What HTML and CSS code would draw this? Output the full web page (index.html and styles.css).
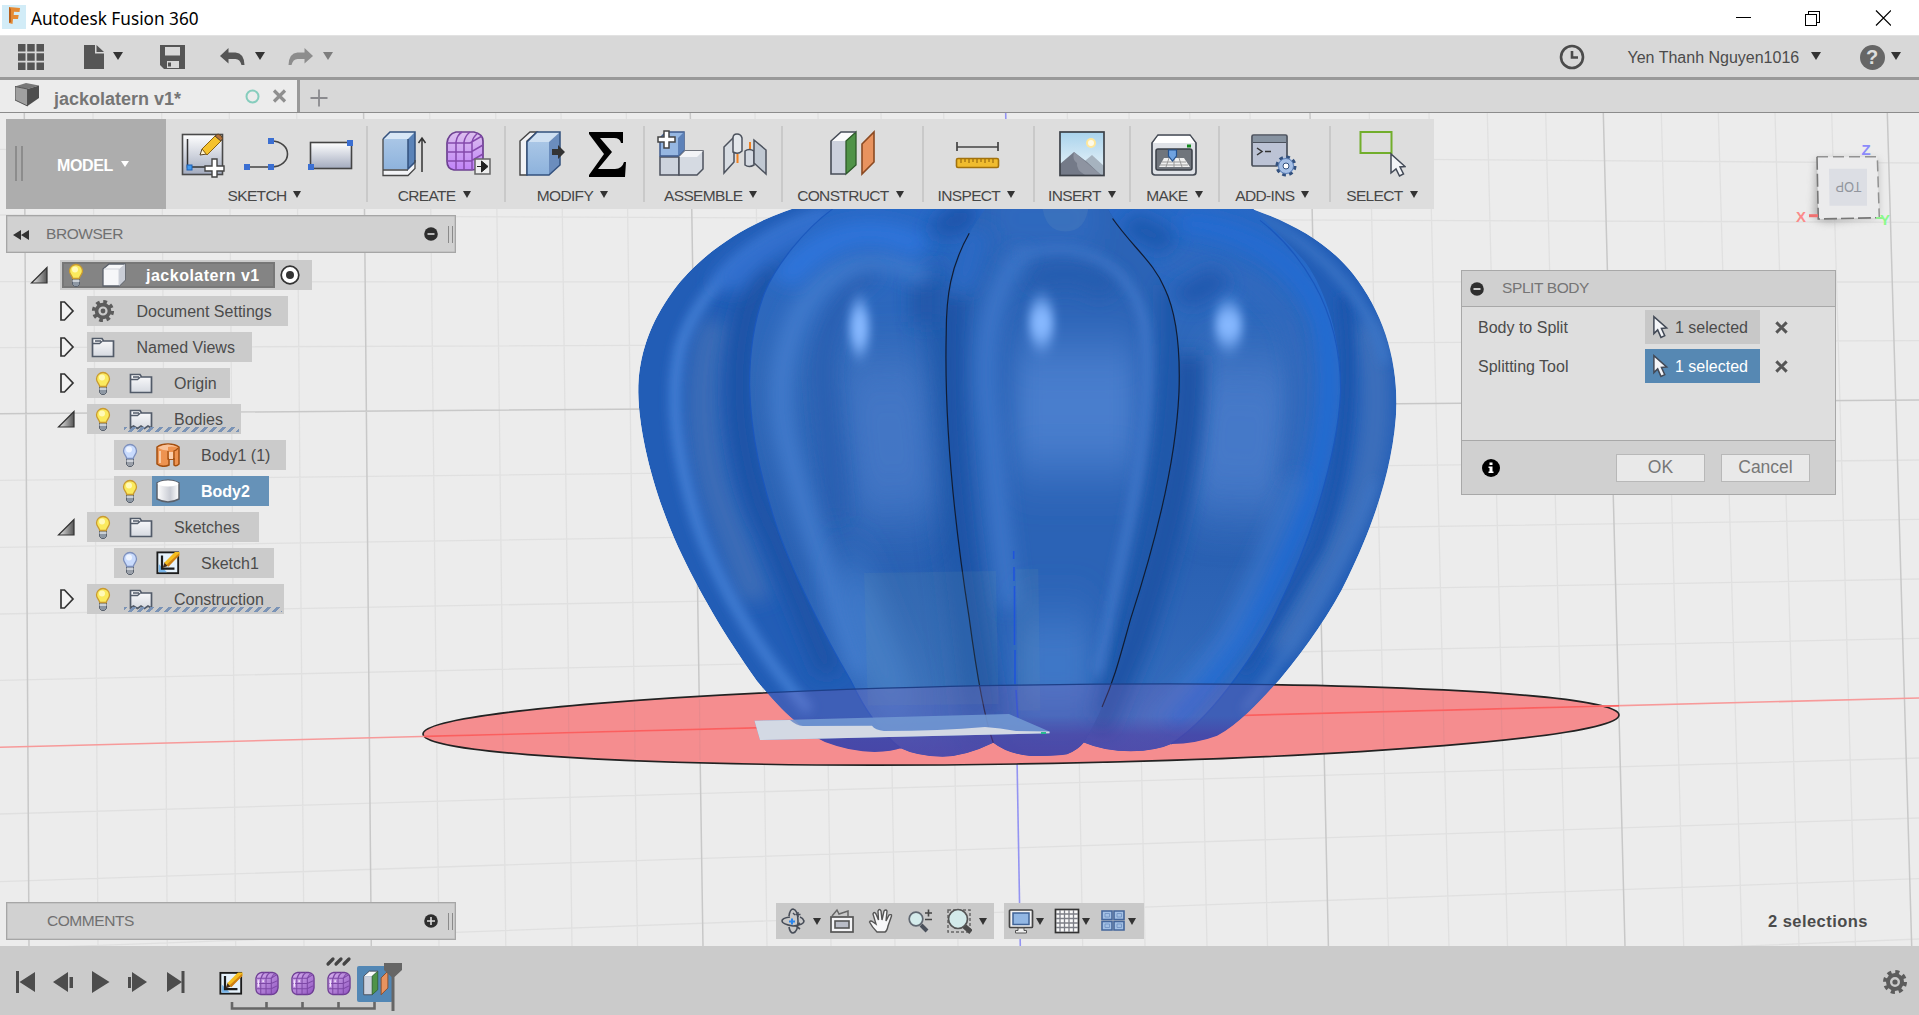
FILE: index.html
```html
<!DOCTYPE html>
<html lang="en">
<head>
<meta charset="utf-8">
<title>Autodesk Fusion 360</title>
<link rel="stylesheet" href="styles.css">
</head>
<body>
<svg class="defs" width="0" height="0" aria-hidden="true">
  <defs>
    <linearGradient id="gPaper" x1="0" y1="0" x2="0" y2="1"><stop offset="0" stop-color="#fff"/><stop offset="1" stop-color="#a3abbe"/></linearGradient>
    <linearGradient id="gBlue" x1="0" y1="0" x2="0" y2="1"><stop offset="0" stop-color="#a9c6e6"/><stop offset="1" stop-color="#8db2dc"/></linearGradient>
    <linearGradient id="gPurple" x1="0" y1="0" x2="0" y2="1"><stop offset="0" stop-color="#dcc0ee"/><stop offset="1" stop-color="#c083f8"/></linearGradient>
    <linearGradient id="gPurple2" x1="0" y1="0" x2="1" y2="1"><stop offset="0" stop-color="#d9b4f0"/><stop offset="1" stop-color="#8f52c0"/></linearGradient>
    <linearGradient id="gFolder" x1="0" y1="0" x2="0" y2="1"><stop offset="0" stop-color="#fdfdfe"/><stop offset="1" stop-color="#d5d9e0"/></linearGradient>
    <linearGradient id="gTri" x1="0" y1="0" x2="1" y2="0"><stop offset="0" stop-color="#eee"/><stop offset="1" stop-color="#555"/></linearGradient>
    <linearGradient id="gSky" x1="0" y1="0" x2="0" y2="1"><stop offset="0" stop-color="#a9d3ec"/><stop offset="1" stop-color="#eef6fa"/></linearGradient>
    <linearGradient id="gCyl" x1="0" y1="0" x2="1" y2="0"><stop offset="0" stop-color="#fff"/><stop offset=".6" stop-color="#c9ccd4"/><stop offset="1" stop-color="#fff"/></linearGradient>
    <symbol id="bulb" viewBox="0 0 18 24">
      <path d="M5.500 15h7v6.500l-2 2h-3l-2-2z" fill="#8d97a3" stroke="#59616d"/>
      <path d="M5.500 18h7" stroke="#e6e9ee" stroke-width="1.400"/>
      <path d="M9 1.500a6.500 6.500 0 0 0-6.500 6.500c0 3 2.500 4.500 3.300 7.500h6.400c.8-3 3.300-4.500 3.300-7.500A6.500 6.500 0 0 0 9 1.500z" fill="#fbea5d" stroke="#c99a30" stroke-width="1.300"/>
      <circle cx="8" cy="6.500" r="3" fill="#fff9b8"/>
    </symbol>
    <symbol id="bulb-off" viewBox="0 0 18 24">
      <path d="M5.500 15h7v6.500l-2 2h-3l-2-2z" fill="#9aa0a9" stroke="#59616d"/>
      <path d="M5.500 18h7" stroke="#e6e9ee" stroke-width="1.400"/>
      <path d="M9 1.500a6.500 6.500 0 0 0-6.500 6.500c0 3 2.500 4.500 3.300 7.500h6.400c.8-3 3.300-4.500 3.300-7.500A6.500 6.500 0 0 0 9 1.500z" fill="#c9dbfd" stroke="#7d90bd" stroke-width="1.300"/>
      <circle cx="8" cy="6.500" r="3" fill="#eef4ff"/>
    </symbol>
    <symbol id="folder" viewBox="0 0 24 22">
      <path d="M1.500 20V2.500h9.500l1.500 2.500h10v15.500h-21z" fill="url(#gFolder)" stroke="#525b69" stroke-width="1.700"/>
      <path d="M1.500 7.500h7l3-2.500M4 5h6" fill="none" stroke="#525b69" stroke-width="1.300"/>
    </symbol>
    <symbol id="folder-torn" viewBox="0 0 24 22">
      <path d="M1.500 20V2.500h9.500l1.500 2.500h10v15l-3.500-2-3.500 2.500-3.500-2.500-3.500 2.500-4-2.500z" fill="url(#gFolder)" stroke="#525b69" stroke-width="1.700"/>
      <path d="M1.500 7.500h7l3-2.500M4 5h6" fill="none" stroke="#525b69" stroke-width="1.300"/>
    </symbol>
    <symbol id="sketch-sm" viewBox="0 0 26 26">
      <rect x="1.500" y="1.500" width="22.500" height="22.500" fill="#e6f2fb" stroke="#1c1c1c" stroke-width="2"/>
      <path d="M3 14v9h9z" fill="#79b6ea"/>
      <path d="M6.500 5v14H20" fill="none" stroke="#1c1c1c" stroke-width="2.400"/>
      <path d="M7 18.500l2.500-6.500 4 4z" fill="#49301c"/>
      <path d="M9 12.800L20.500 1h5v3.500l-12.500 12z" fill="#f5bd1e"/><path d="M11.500 15L25 2.500V5L13.500 17z" fill="#cf7f14"/>
    </symbol>
    <symbol id="tri-closed" viewBox="0 0 18 22"><path d="M4 2h3.500l8.500 9-8.500 9H4z" fill="#f3f3f3" stroke="#333" stroke-width="1.700"/></symbol>
    <symbol id="tri-open" viewBox="0 0 18 18"><path d="M17 1.500v15.500H1.500z" fill="url(#gTri)" stroke="#333" stroke-width="1.200"/></symbol>
    <symbol id="form" viewBox="0 0 25 25">
      <path d="M7 1h11q6 1 6 6v10q-1 7-7 7H6q-5-1-5-6V7q1-5 6-6z" fill="url(#gPurple2)" stroke="#6e3d94" stroke-width="1.400"/>
      <path d="M2 7h15l6-4M2 12.500h15l6.500-3M2 18h15l6-3M6 24V8q1-5 4-7M11.500 24V7q1-4 4-6M17 24V7q1-3 4-5" fill="none" stroke="#7d48a6" stroke-width="1.100"/>
      <path d="M3.500 9v7M8.500 9v2" stroke="#f2e2fb" stroke-width="1.500"/>
    </symbol>
    <symbol id="cursor" viewBox="0 0 18 26"><path d="M2 1.500v18l4-4 3.500 8 4-1.800-3.500-7.700 5.500-.5z" fill="#f4f5f8" stroke="#434a57" stroke-width="1.600"/></symbol>
    <symbol id="x" viewBox="0 0 16 16"><path d="M2.500 2.500l11 11M13.500 2.500l-11 11" stroke="currentColor" stroke-width="3.200"/></symbol>
    <symbol id="gear" viewBox="0 0 26 26">
      <circle cx="13" cy="13" r="10" fill="none" stroke="#5c5c5c" stroke-width="4" stroke-dasharray="4 3.850"/>
      <circle cx="13" cy="13" r="7" fill="none" stroke="#5c5c5c" stroke-width="4"/><circle cx="13" cy="13" r="2.600" fill="#5c5c5c"/>
    </symbol>
    <symbol id="plane-split" viewBox="0 0 48 48">
      <path d="M3 11L13 2h15l-10 9z" fill="#fbfbfc"/><path d="M3 11h15v33H3z" fill="#ccd1dd"/>
      <path d="M18 11L28 2v33l-10 9z" fill="#4f9347" stroke="#2e5a2a" stroke-width="1.300"/>
      <path d="M18 44H3V11L13 2h15" fill="none" stroke="#474d58" stroke-width="1.600"/>
      <path d="M34 14l12-12v30L34 44z" fill="#e8935f" stroke="#8b4a22" stroke-width="1.600"/>
    </symbol>
  </defs>
</svg>

<div class="app">
  <header class="titlebar">
    <svg class="logo" width="24" height="24" viewBox="0 0 24 24"><rect width="24" height="24" fill="#d2ecf7"/><path d="M7 2l11 1-.5 4-5.500-.2-.3 3.200h5l-.7 4H11l-.5 5L7 18z" fill="#e58a33"/><path d="M7 2l2 2v13l-2 1z" fill="#b9601c"/></svg>
    <h1>Autodesk Fusion 360</h1>
    <svg class="winbtns" width="160" height="20" viewBox="0 0 160 20" fill="none" stroke="#000" shape-rendering="crispEdges"><path d="M5 8.500h15"/><path d="M74.500 5.500h11v11h-11zM77.500 5.500v-3h11v11h-3"/><path d="M145 1.500l15 15M160 1.500l-15 15" shape-rendering="auto" stroke-width="1.200"/></svg>
  </header>

  <div class="quickbar">
    <svg width="26" height="26" viewBox="0 0 26 26" fill="#555"><path d="M0 0h7.500v7.500H0zM9.200 0h7.500v7.500H9.200zM18.500 0H26v7.500h-7.500zM0 9.200h7.500v7.500H0zM9.200 9.200h7.500v7.500H9.200zM18.500 9.200H26v7.500h-7.500zM0 18.500h7.500V26H0zM9.200 18.500h7.500V26H9.200zM18.500 18.500H26V26h-7.500z"/></svg>
    <svg class="q-file" width="20" height="24" viewBox="0 0 20 24" fill="#555"><path d="M0 0h11v8.500h9V24H0z"/><path d="M12.500 0v7H20z"/></svg>
    <i class="caret q-c1"></i>
    <svg class="q-save" width="25" height="24" viewBox="0 0 25 24"><path d="M0 0h25v24H4l-4-4z" fill="#555"/><path d="M5 2h15v8.500H5zM7 16h12v7H7z" fill="#d8d8d8"/><path d="M8 17.500h3v4H8z" fill="#555"/></svg>
    <svg class="q-undo" width="25" height="18" viewBox="0 0 25 18"><path d="M0 8l8.500-8v4.500h7Q24 5 24.500 17h-3Q20 11 15.500 11h-7v4.500z" fill="#555"/></svg>
    <i class="caret q-c2"></i>
    <svg class="q-redo" width="25" height="18" viewBox="0 0 25 18"><path d="M25 8l-8.500-8v4.500h-7Q1 5 .5 17h3Q5 11 9.500 11h7v4.500z" fill="#8d8d8d"/></svg>
    <i class="caret q-c3 dim"></i>
    <div class="quick-right">
      <svg width="26" height="26" viewBox="0 0 26 26" fill="none" stroke="#4b4b4b"><circle cx="13" cy="13" r="11" stroke-width="2.600"/><path d="M13 7v6.500h6" stroke-width="2.600"/></svg>
      <span class="user">Yen Thanh Nguyen1016</span><i class="caret"></i>
      <span class="help">?</span><i class="caret"></i>
    </div>
  </div>

  <nav class="tabs">
    <div class="tab">
      <svg width="24" height="24" viewBox="0 0 24 24"><path d="M0 3.500L11 0l13 2.500L12.500 6z" fill="#777"/><path d="M0 3.500L12.500 6v17L0 17z" fill="#a0a0a0" stroke="#555"/><path d="M12.500 6L24 2.500V15l-11.500 8z" fill="#4e4e4e"/></svg>
      <span class="tab-name">jackolatern v1*</span>
      <svg class="ring" width="15" height="15" viewBox="0 0 15 15"><circle cx="7.500" cy="7.500" r="6" fill="none" stroke="#86cdbd" stroke-width="2"/></svg>
      <svg class="tab-x" width="17" height="16"><use href="#x"/></svg>
    </div>
    <svg class="tab-add" width="18" height="18" viewBox="0 0 18 18"><path d="M9 .5v17M.5 9h17" stroke="#8a8a8e" stroke-width="1.800"/></svg>
  </nav>

  <main class="viewport">
    <svg class="scene" width="1919" height="833" viewBox="0 113 1919 833">
      <defs>
        <filter id="b6" filterUnits="userSpaceOnUse" x="-100" y="-150" width="1800" height="1800"><feGaussianBlur stdDeviation="9 14"/></filter>
        <filter id="b14" filterUnits="userSpaceOnUse" x="-100" y="-150" width="1800" height="1800"><feGaussianBlur stdDeviation="17 24"/></filter>
        <filter id="b25" filterUnits="userSpaceOnUse" x="-100" y="-150" width="1800" height="1800"><feGaussianBlur stdDeviation="24 70"/></filter>
        <filter id="bHi" filterUnits="userSpaceOnUse" x="-100" y="-150" width="1800" height="1800"><feGaussianBlur stdDeviation="9 25"/></filter>
        <filter id="cubeShadow" x="-50%" y="-50%" width="200%" height="200%"><feGaussianBlur stdDeviation="4"/></filter>
        <path id="body" d="M400 10C280 55 190 150 140 245C96 330 73 420 73 520C75 640 105 800 150 940C190 1060 235 1170 300 1300Q350 1385 375 1410Q400 1445 430 1465Q480 1492 525 1492Q560 1490 575 1482Q605 1503 655 1505Q700 1503 752 1467Q780 1498 825 1503Q880 1502 893 1498Q915 1485 925 1466Q965 1490 1015 1490Q1065 1488 1092 1470Q1140 1470 1180 1448C1230 1410 1270 1340 1300 1295C1350 1210 1400 1110 1430 1020C1475 890 1520 720 1523 550C1523 420 1495 300 1440 200C1390 110 1310 50 1215 10Z"/>
        <path id="lobeL" d="M455 10C390 80 335 180 315 250C290 340 286 440 286 500C288 640 310 760 335 870C365 1000 430 1180 480 1300Q520 1420 575 1482Q605 1503 655 1505Q700 1503 752 1467C735 1400 720 1250 706 1130C690 960 672 700 662 520C658 350 670 200 700 110L745 10Z"/>
        <path id="lobeC" d="M745 10C690 100 665 220 662 360C658 600 676 860 706 1130C720 1280 735 1400 752 1467Q780 1498 825 1503Q880 1502 893 1498Q915 1485 925 1466C960 1390 990 1260 1015 1130C1045 1000 1100 740 1107 520C1110 400 1100 300 1080 240C1050 150 1010 120 965 10Z"/>
        <path id="lobeR" d="M965 10C1010 120 1050 150 1080 240C1100 300 1110 400 1107 520C1100 740 1045 1000 1015 1130C990 1260 960 1390 925 1466Q965 1490 1015 1490Q1065 1488 1092 1470C1180 1390 1270 1190 1300 1090C1350 950 1410 700 1416 520C1418 380 1390 250 1350 170C1320 120 1280 70 1240 10Z"/>
        <clipPath id="cBody"><use href="#body"/></clipPath><clipPath id="cL"><use href="#lobeL"/></clipPath><clipPath id="cC"><use href="#lobeC"/></clipPath><clipPath id="cR"><use href="#lobeR"/></clipPath>
        <clipPath id="cBodyPx"><use href="#body" transform="translate(600 200) scale(.523 .37)"/></clipPath>
        <linearGradient id="vL" x1="0" y1="0" x2="0" y2="1"><stop offset="0" stop-color="#2868c6"/><stop offset=".3" stop-color="#3068b8"/><stop offset=".65" stop-color="#2a61b3"/><stop offset="1" stop-color="#376fc0"/></linearGradient>
        <linearGradient id="purpleFade" x1="0" y1="0" x2="0" y2="1"><stop offset="0" stop-color="#50319a" stop-opacity="0"/><stop offset=".35" stop-color="#50319a" stop-opacity=".45"/><stop offset="1" stop-color="#50319a" stop-opacity=".6"/></linearGradient>
      </defs>
      <g class="grid">
        <path d="M93 113L98 946M161.700 113L167.300 946M229.300 113L235.700 946M296.700 113L304 946M429.700 113L439 946M495.700 113L505.800 946M561 113L572 946M626.300 113L637.500 946M755 113L767 946M818 113L831 946M881 113L895 946M943.700 113L958 946M1067.300 113L1082.700 946M1129 113L1145 946M1189.700 113L1207 946M1250 113L1267.500 946M1369.300 113L1388.500 946M1429 113L1449 946M1487.300 113L1507.500 946M1545.700 113L1566.500 946M1661.300 113L1683.700 946M1718.300 113L1742 946M1775 113L1799 946M1831.700 113L1855.500 946M0 149.300L1919 163M0 215L1919 222.300M0 281.700L1919 282M0 347.700L1919 340.700M0 480.300L1919 460M0 547.300L1919 519.300M0 614L1919 579M0 680.300L1919 638.300M0 814L1919 758M0 881.700L1919 818M0 949L1919 878.700M0 1016L1919 939"/>
        <path class="major" d="M24.300 113L29 946M363.600 113L371.300 946M690.300 113L703 946M1310 113L1328.400 946M1603.300 113L1625 946M1887.300 113L1911.700 946M0 413.700L1919 400"/>
      </g>
      <path d="M1005.700 113L1020.300 946" stroke="#9494f2" stroke-width="1.600"/>
      <ellipse rx="598" ry="39.400" transform="matrix(1 -.0159 0 1 1021 724.500)" fill="#f58d8f" stroke="#222" stroke-width="1.600"/>
      <path class="grid-under" d="M502.500 715L503 750M568.500 708L569 755M634.500 703L635 758M699.500 699L700 760M1322 688L1323 752M1383 689L1384 748M1443 692L1444 743M1501 696L1502 738"/>
      <path d="M0 747.300L1919 698" stroke="#f79a9a" stroke-width="1.600"/>
      <path d="M424 736.400L1619 705.700" stroke="#fb5f5f" stroke-width="1.600"/>

      <g transform="translate(600 200) scale(.523 .37)">
        <g clip-path="url(#cBody)" fill="none">
          <use href="#body" fill="#225db6"/>
          <path d="M225 330C190 450 190 640 225 800L300 1080" stroke="#3b6cb7" stroke-width="66" filter="url(#b14)"/>
          <path d="M330 180C240 300 250 700 330 900L440 1280" stroke="#1b53a6" stroke-width="50" filter="url(#b14)"/>
          <path d="M430 40C300 90 190 240 155 390C130 530 145 690 185 870C220 1020 300 1220 400 1380" stroke="#3f7bd2" stroke-width="24" filter="url(#b6)"/>
          <path d="M520 30C400 50 270 150 240 240" stroke="#3070cf" stroke-width="60" filter="url(#b14)"/>
          <path d="M1465 330C1495 480 1490 700 1440 860L1300 1220" stroke="#3d70bb" stroke-width="56" filter="url(#b14)"/>
          <path d="M1420 260C1440 460 1430 720 1370 940L1230 1270" stroke="#1b56ad" stroke-width="26" filter="url(#b6)"/>
          <path d="M1240 30C1390 130 1480 290 1500 440" stroke="#3b75c6" stroke-width="20" filter="url(#b6)"/>
          <path d="M1480 760C1440 930 1370 1130 1230 1380" stroke="#3d75c5" stroke-width="14" filter="url(#b6)"/>
        </g>
        <g clip-path="url(#cL)" fill="none">
          <use href="#lobeL" fill="url(#vL)"/>
          <path d="M630 200C670 300 655 700 690 1000L725 1450" stroke="#1d54a6" stroke-width="60" filter="url(#b25)" opacity=".8"/>
          <path d="M540 430L570 860" stroke="#4679c8" stroke-width="150" filter="url(#b25)" opacity=".85"/>
          <path d="M530 190C470 230 430 320 425 470L450 860" stroke="#295fb1" stroke-width="36" filter="url(#b14)"/>
          <path d="M625 220V330" stroke="#2258ab" stroke-width="60" filter="url(#b14)"/>
          <path d="M620 210C540 130 440 160 385 300C340 420 335 560 365 700C390 850 430 1000 500 1280" stroke="#427ccd" stroke-width="40" filter="url(#b14)"/>
          <path d="M350 220C440 60 540 70 620 130" stroke="#2f74db" stroke-width="60" filter="url(#b14)"/>
          <path d="M690 10Q700 90 640 60" stroke="#1d55ab" stroke-width="60" filter="url(#b14)"/>
          <ellipse cx="496" cy="345" rx="19" ry="70" fill="#86b8ff" filter="url(#bHi)"/>
          <path d="M470 1000L580 1400" stroke="#437dcc" stroke-width="70" filter="url(#b25)"/>
        </g>
        <g clip-path="url(#cR)" fill="none">
          <use href="#lobeR" fill="url(#vL)"/>
          <path d="M1235 430L1215 840" stroke="#487bca" stroke-width="170" filter="url(#b25)" opacity=".9"/>
          <path d="M1125 420C1130 640 1090 900 1020 1200L950 1440" stroke="#1c53a5" stroke-width="60" filter="url(#b14)"/>
          <path d="M1080 150C1170 190 1250 180 1320 340C1350 460 1350 600 1320 760" stroke="#3269bd" stroke-width="36" filter="url(#b14)"/>
          <path d="M1190 205L1110 270" stroke="#2259ae" stroke-width="60" filter="url(#b14)"/>
          <path d="M1010 60L1090 120" stroke="#1f58ae" stroke-width="60" filter="url(#b14)"/>
          <path d="M1110 60C1260 80 1350 190 1385 330C1410 530 1385 730 1320 930C1270 1090 1200 1250 1090 1420" stroke="#246cd4" stroke-width="44" filter="url(#b14)"/>
          <path d="M1335 750L1200 1180L1050 1420" stroke="#3d77cb" stroke-width="24" filter="url(#b14)"/>
          <ellipse cx="1202" cy="338" rx="27" ry="56" fill="#86b8ff" filter="url(#bHi)"/>
        </g>
        <g clip-path="url(#cC)" fill="none">
          <use href="#lobeC" fill="#2b63b6"/>
          <path d="M850 20V80" stroke="#3975cf" stroke-width="200" filter="url(#b25)"/>
          <path d="M910 390V730" stroke="#4a7ecd" stroke-width="230" filter="url(#b25)"/>
          <path d="M820 225Q900 165 980 245" stroke="#275db0" stroke-width="70" filter="url(#b14)"/>
          <path d="M1100 230C1110 600 1060 960 960 1400" stroke="#1e56a9" stroke-width="56" filter="url(#b14)"/>
          <path d="M670 260C650 600 690 1000 740 1400" stroke="#1c53a6" stroke-width="62" filter="url(#b14)"/>
          <path d="M720 80L690 240" stroke="#2a69c4" stroke-width="60" filter="url(#b14)"/>
          <path d="M810 140C735 250 730 450 745 600C755 750 765 900 785 1100" stroke="#3f79cd" stroke-width="32" filter="url(#b14)"/>
          <path d="M800 150C900 100 1010 150 1040 330C1055 500 1035 700 1010 880L950 1280" stroke="#3c75c7" stroke-width="20" filter="url(#b6)"/>
          <path d="M870 1130V1380" stroke="#3f78c8" stroke-width="140" filter="url(#b25)"/>
          <ellipse cx="844" cy="332" rx="24" ry="62" fill="#86b8ff" filter="url(#bHi)"/>
          <path d="M845 10Q850 85 890 85T935 10z" fill="#6a8fb8" opacity=".2"/>
        </g>
        <g fill="none">
          <path class="edge blue" d="M445 24C390 80 335 180 315 250C290 340 286 440 286 500C288 640 310 760 335 870C365 1000 430 1180 480 1300Q520 1420 575 1482"/>
          <path class="edge blue" d="M1262 55C1330 130 1418 280 1416 520C1410 700 1350 950 1300 1090C1270 1190 1180 1390 1092 1470"/>
          <path class="edge" d="M706 90C670 180 662 260 662 360C658 600 676 860 706 1130C720 1280 735 1400 752 1467"/>
          <path class="edge" d="M980 50C1020 130 1060 170 1080 240C1100 300 1110 400 1107 520C1100 740 1045 1000 1015 1130C995 1230 985 1290 960 1370"/>
        </g>
        <path d="M505 1008L757 1003 762 1362 512 1366zM795 998L838 997 842 1380H800z" fill="#7799a5" opacity=".12"/>
      </g>
      <path d="M1013.700 551V559M1014 567V581M1014.500 586V645M1015 650V684M1016 690L1018 722" stroke="#1c50e0" stroke-width="1.600" opacity=".85"/>
      <g clip-path="url(#cBodyPx)">
        <ellipse rx="598" ry="39.400" transform="matrix(1 -.0159 0 1 1021 724.500)" fill="#8f63b8" fill-opacity=".26" stroke="#1d3f88" stroke-width="1.200"/>
        <path d="M740 716H1280V770H740z" fill="url(#purpleFade)"/>
      </g>
      <path d="M754.500 720.700L1009 714 1049.500 731.500V733.300L760 740z" fill="#7097d2" opacity=".9"/>
      <path d="M754.500 720.700L790 720Q796 725.500 803 726L872 725.700Q875 730 884 731Q940 731 985 727Q1000 728 1016 731L1049.500 731.500V733.300L760 740z" fill="#d3d9e4"/>
      <path d="M1041 733h5" stroke="#28b890" stroke-width="2"/>

      <path d="M1817 160h60v56l-50 6-13-4z" fill="#888" opacity=".65" filter="url(#cubeShadow)"/>
      <path d="M1817 156.700H1877.300L1879.300 217.700 1818.300 219z" fill="#ebebec"/>
      <path d="M1817 156.700H1877.300L1879.300 217.700" fill="none" stroke="#929292" stroke-width="1.500" stroke-dasharray="11 5"/>
      <path d="M1817 156.700L1818.300 219L1879.300 217.700" fill="none" stroke="#777" stroke-width="1.600" stroke-dasharray="13 4"/>
      <path d="M1829 168.700h38v37h-37.500z" fill="#dcdee4"/>
      <text class="top" x="1848.500" y="192" transform="rotate(180 1848.500 187)" textLength="26" lengthAdjust="spacingAndGlyphs">TOP</text>
      <path d="M1809 215.700h9" stroke="#f07070" stroke-width="3"/><path d="M1876 218h7" stroke="#8ef08e" stroke-width="2"/>
      <text class="axis" x="1866" y="155" fill="#8b8bfb">Z</text><text class="axis" x="1801" y="221.500" fill="#fb8a8a">X</text><text class="axis" x="1885" y="225" fill="#8bfa8b">Y</text>
    </svg>

    <section class="toolbar">
      <div class="workspace"><span class="grip"></span>MODEL<i class="caret"></i></div>
      <div class="group w201">
        <div class="icons">
          <svg viewBox="0 0 48 48"><rect x="3.500" y="4.500" width="40" height="40" fill="url(#gPaper)" stroke="#4a4a4a" stroke-width="1.600"/><path d="M8.500 9v28H36" fill="none" stroke="#333" stroke-width="1.500"/><rect x="8" y="35" width="5" height="5" fill="#3f9af0" stroke="#1c5fb4"/><path d="M21 25l2-6 5 5z" fill="#fff3d0" stroke="#5b4526"/><path d="M23 19L36 6l6 5-14 14z" fill="#f5c22d" stroke="#8a6210"/><path d="M36 6l3-2q4 1 4.500 4.500L42 11z" fill="#b3713a" stroke="#5b4526"/><path d="M33 29h5v7h7v5h-7v6h-5v-6h-7v-5h7z" fill="#fff" stroke="#444" stroke-width="1.400"/></svg>
          <svg viewBox="0 0 48 48"><path d="M4 37h24c22 0 22-26 0-26" fill="none" stroke="#444" stroke-width="1.600"/><path d="M1 34h6v6H1zM25 34h6v6h-6zM25 8h6v6h-6z" fill="#3b6fd2"/></svg>
          <svg viewBox="0 0 48 48"><rect x="3.500" y="12.500" width="41" height="26" fill="url(#gPaper)" stroke="#444" stroke-width="1.600"/><path d="M1 34h6v6H1zM40 10h6v6h-6z" fill="#3b6fd2"/></svg>
        </div><div class="label">SKETCH<i class="caret"></i></div>
      </div>
      <div class="group w138">
        <div class="icons">
          <svg viewBox="0 0 48 48"><path d="M3 9l7-7h25l-7 7z" fill="#d8e7f6"/><path d="M28 9l7-7v35l-7 9z" fill="#5b83b8"/><path d="M3 9h25v32H3z" fill="url(#gBlue)"/><path d="M3 39.500h25v6H3zM28 39.500l7-6.500v6l-7 6.500z" fill="#f3f4f7"/><path d="M3 9l7-7h25v30l-7 7V9" fill="none" stroke="#33517e" stroke-width="1.500"/><path d="M3 9v36.500h25l7-7V30M3 40h25" fill="none" stroke="#474747" stroke-width="1.300"/><path d="M42 42V9M38.500 13l3.500-5 3.500 5" fill="none" stroke="#333" stroke-width="1.500"/></svg>
          <svg viewBox="0 0 48 48"><path d="M12 2h18q9 2 9 9v18q-2 11-11 11H10q-7-1-7-9V13Q4 4 12 2z" fill="url(#gPurple)" stroke="#6d4191" stroke-width="1.700"/><path d="M3 13h23l12-7M3 22h24l12-7M3 31h24l12-7M12 40V12q1-7 6-10M20 40V12q1-6 6-10M28 40V12q1-5 6-9" fill="none" stroke="#8449ac" stroke-width="1.500"/><path d="M31 29h15v15H31z" fill="#eee" stroke="#666" stroke-width="1.500"/><path d="M33 36.500h6M37.500 31l6.500 5.500-6.500 5.500z" fill="#222" stroke="#222"/></svg>
        </div><div class="label">CREATE<i class="caret"></i></div>
      </div>
      <div class="group w138">
        <div class="icons">
          <svg viewBox="0 0 48 48"><path d="M2 11l10-9h7L9 11v34H2z" fill="#f1f2f5" stroke="#444" stroke-width="1.400"/><path d="M9 12l10-10h23L31 12z" fill="#cfe0f2"/><path d="M31 12L42 2v33L31 45z" fill="#6b8dbd"/><path d="M9 12h22v33H9z" fill="url(#gBlue)"/><path d="M9 12l10-10h23v33L31 45H9z" fill="none" stroke="#33517e" stroke-width="1.500"/><path d="M34 19h6v-4l7 7-7 7v-4h-6z" fill="#333"/></svg>
          <svg viewBox="0 0 48 48"><path d="M7 2h34v11h-2q-1-5-7-5H18l12 14-14 17h17q7 0 9-7h2l-1 15H7v-2l15-21L7 4z" fill="#000"/></svg>
        </div><div class="label">MODIFY<i class="caret"></i></div>
      </div>
      <div class="group w138">
        <div class="icons">
          <svg viewBox="0 0 48 48"><path d="M3 27h19v18H3z" fill="#cdd3dd" stroke="#4c525d" stroke-width="1.500"/><path d="M22 27l6-6h18v18l-6 6H22z" fill="#d5dae2" stroke="#4c525d" stroke-width="1.500"/><path d="M22 27l6-6h18l-6 6z" fill="#f3f4f7"/><path d="M3 8l6-6h18v18l-6 6H3z" fill="#96b7e2" stroke="#3e5a8c" stroke-width="1.500"/><path d="M21 8l6-6v18l-6 6z" fill="#5d81b8"/><path d="M7 1h5v6h6v5h-6v6H7v-6H1V7h6z" fill="#fff" stroke="#444" stroke-width="1.500"/></svg>
          <svg viewBox="0 0 48 48"><path d="M3 17L13 7v25L3 43z" fill="#d8dde3" stroke="#4c525d" stroke-width="1.500"/><path d="M12 8q0-4 4-4t5 4v13q-4 4-9 1z" fill="#e4e8ec" stroke="#4c525d" stroke-width="1.500"/><path d="M16.500 24v9M29 12v10" stroke="#f08020" stroke-width="2"/><path d="M24 21q4-3 9 0v14q-5 3-9 0z" fill="#d5dae2" stroke="#4c525d" stroke-width="1.500"/><path d="M33 10l12 10v24L33 33z" fill="#c0c8d2" stroke="#4c525d" stroke-width="1.500"/></svg>
        </div><div class="label">ASSEMBLE<i class="caret"></i></div>
      </div>
      <div class="group w141">
        <div class="icons"><svg><use href="#plane-split"/></svg></div><div class="label">CONSTRUCT<i class="caret"></i></div>
      </div>
      <div class="group w111">
        <div class="icons"><svg viewBox="0 0 48 48"><path d="M3 17h41M3 12v9M44 12v9" stroke="#444" stroke-width="1.700"/><rect x="2.500" y="28.500" width="42" height="9" rx="1.500" fill="#f0bc2e" stroke="#a2720c" stroke-width="1.600"/><path d="M7 29v4M11 29v3M15 29v4M19 29v3M23 29v4M27 29v3M31 29v4M35 29v3M39 29v4" stroke="#8a5c08"/></svg></div><div class="label">INSPECT<i class="caret"></i></div>
      </div>
      <div class="group w96">
        <div class="icons"><svg viewBox="0 0 48 48"><rect x="2" y="2" width="44" height="43" fill="url(#gSky)"/><circle cx="33" cy="13" r="5" fill="#ffe79a"/><circle cx="33" cy="13" r="3" fill="#fffbe8"/><path d="M22 35l12-10 12 11v9H22z" fill="#a6b3bf"/><path d="M2 34l14-12 13 10 14 13H2z" fill="#747a88"/><path d="M16 22q-2 8 3 11-1 7 8 12h16z" fill="#8e94a1"/><rect x="2" y="2" width="44" height="43.500" fill="none" stroke="#3c4148" stroke-width="1.700"/></svg></div><div class="label">INSERT<i class="caret"></i></div>
      </div>
      <div class="group w89">
        <div class="icons"><svg viewBox="0 0 48 48"><path d="M8 5h32l6 8v29q0 3-3 3H5q-3 0-3-3V13z" fill="#dfe2e7" stroke="#454b55" stroke-width="1.700"/><path d="M8 6h32l5 7H3z" fill="#fff"/><rect x="6" y="19" width="36" height="21" rx="2" fill="#70757c" stroke="#3a3f47" stroke-width="1.500"/><path d="M14 28h20l6 9H9z" fill="#f0f0f0"/><path d="M12 32h24M10 35h28M19 28l-3 9M24 28v9M29 28l3 9" stroke="#999"/><path d="M18.500 20h8v6l-4 5-4-5z" fill="#6fa2e0" stroke="#25528f" stroke-width="1.200"/><path d="M37 14.500h4v3h-4z" fill="#138a1c"/></svg></div><div class="label">MAKE<i class="caret"></i></div>
      </div>
      <div class="group w111">
        <div class="icons"><svg viewBox="0 0 48 48"><rect x="2" y="5" width="35" height="31" rx="1.500" fill="#bcc3d5" stroke="#4a505b" stroke-width="1.700"/><path d="M3 6h33v6H3z" fill="#8793a1"/><path d="M3 12.500h33" stroke="#4a505b"/><path d="M7 18l5 3.500L7 25M15 21.500h6" fill="none" stroke="#333" stroke-width="1.500"/><circle cx="36" cy="36" r="8.500" fill="#a6c0e6" stroke="#33517e" stroke-width="4" stroke-dasharray="3.500 3.170"/><circle cx="36" cy="36" r="7.500" fill="#a6c0e6" stroke="#5f80b6"/><circle cx="36" cy="36" r="3" fill="#fff" stroke="#33517e"/></svg></div><div class="label">ADD-INS<i class="caret"></i></div>
      </div>
      <div class="group w105">
        <div class="icons"><svg viewBox="0 0 48 48"><rect x="2.500" y="2" width="31" height="21" fill="none" stroke="#72ae2c" stroke-width="2"/><path d="M33 24v19l5-4 3.500 7 4-2-3.500-7 5-.5z" fill="#f3f4f7" stroke="#434a57" stroke-width="1.500"/></svg></div><div class="label">SELECT<i class="caret"></i></div>
      </div>
    </section>

    <section class="panel-bar browser">
      <svg class="collapse" width="16" height="10" viewBox="0 0 16 10"><path d="M8 0v10L0 5zM16 0v10L8 5z" fill="#333"/></svg>
      <span>BROWSER</span>
      <svg class="round" width="14" height="14" viewBox="0 0 14 14"><circle cx="7" cy="7" r="6.800" fill="#2e2e2e"/><path d="M3.500 7h7" stroke="#ddd" stroke-width="1.600"/></svg><i class="bars"></i>
    </section>

    <ul class="tree">
      <li class="l0"><svg class="open"><use href="#tri-open"/></svg>
        <div class="bar root"><div class="hl"><svg class="bulb"><use href="#bulb"/></svg><svg class="ti" viewBox="0 0 24 24"><path d="M1 6l6-5h16v16l-6 6H1z" fill="#f6f7f9" stroke="#5b616b" stroke-width="1.300"/><path d="M17 6l6-5v16l-6 6z" fill="#c9cdd6"/><path d="M2 6h15v16" fill="none" stroke="#d0d3da"/></svg><span class="nm">jackolatern v1</span></div>
        <svg class="radio" viewBox="0 0 20 20"><circle cx="10" cy="10" r="8.800" fill="#fff" stroke="#333" stroke-width="1.700"/><circle cx="10" cy="10" r="4" fill="#333"/></svg></div></li>
      <li class="l1"><svg class="shut"><use href="#tri-closed"/></svg><div class="bar w-doc"><svg class="ti t0"><use href="#gear"/></svg><span>Document Settings</span></div></li>
      <li class="l1"><svg class="shut"><use href="#tri-closed"/></svg><div class="bar w-views"><svg class="ti t0"><use href="#folder"/></svg><span>Named Views</span></div></li>
      <li class="l1"><svg class="shut"><use href="#tri-closed"/></svg><div class="bar w-origin"><svg class="bulb"><use href="#bulb"/></svg><svg class="ti"><use href="#folder"/></svg><span>Origin</span></div></li>
      <li class="l1"><svg class="open"><use href="#tri-open"/></svg><div class="bar w-bodies"><svg class="bulb"><use href="#bulb"/></svg><svg class="ti"><use href="#folder-torn"/></svg><span>Bodies</span><i class="hatch"></i></div></li>
      <li class="l2"><div class="bar w-body1"><svg class="bulb"><use href="#bulb-off"/></svg><svg class="ti" viewBox="0 0 24 24"><path d="M1 4q4-3 11-3t11 3v17q-3 3-5 1v-6h-5v6q-7 3-12-1z" fill="#ee9350" stroke="#a24f10" stroke-width="1.500"/><path d="M2 4.500q4 3 10 3V4q4-1 10 .5-10-6-20 0z" fill="#f8c39b"/><path d="M12 8v8h6V8q3-1 4-3" fill="none" stroke="#a24f10" stroke-width="1.300"/><path d="M4 8v12" stroke="#f9c9a3" stroke-width="2"/><path d="M13 9h4v7h-4z" fill="#fbd0ae"/></svg><span>Body1 (1)</span></div></li>
      <li class="l2"><div class="bar w-body2"><svg class="bulb"><use href="#bulb"/></svg><div class="sel"><svg class="ti" viewBox="0 0 24 24"><path d="M1 4q11-6 22 0v16q-11 6-22 0z" fill="url(#gCyl)" stroke="#5b616b" stroke-width="1.500"/><ellipse cx="12" cy="4.500" rx="10.500" ry="3" fill="#fff"/></svg><span>Body2</span></div></div></li>
      <li class="l1"><svg class="open"><use href="#tri-open"/></svg><div class="bar w-sketches"><svg class="bulb"><use href="#bulb"/></svg><svg class="ti"><use href="#folder"/></svg><span>Sketches</span></div></li>
      <li class="l2"><div class="bar w-sketch1"><svg class="bulb"><use href="#bulb-off"/></svg><svg class="ti"><use href="#sketch-sm"/></svg><span>Sketch1</span></div></li>
      <li class="l1"><svg class="shut"><use href="#tri-closed"/></svg><div class="bar w-constr"><svg class="bulb"><use href="#bulb"/></svg><svg class="ti"><use href="#folder-torn"/></svg><span>Construction</span><i class="hatch"></i></div></li>
    </ul>

    <section class="dialog">
      <header><svg width="14" height="14" viewBox="0 0 14 14"><circle cx="7" cy="7" r="6.800" fill="#2e2e2e"/><path d="M3.500 7h7" stroke="#ddd" stroke-width="1.800"/></svg><span>SPLIT BODY</span></header>
      <div class="fields">
        <div class="field"><label>Body to Split</label><button class="pick"><svg><use href="#cursor"/></svg>1 selected</button><svg class="clear"><use href="#x"/></svg></div>
        <div class="field"><label>Splitting Tool</label><button class="pick on"><svg><use href="#cursor"/></svg>1 selected</button><svg class="clear"><use href="#x"/></svg></div>
      </div>
      <footer><svg class="info" viewBox="0 0 18 18"><circle cx="9" cy="9" r="9" fill="#000"/><path d="M7.500 3.500h3v2.500h-3zM6.500 7.500h4v5h1V14h-5v-1.500h1V9h-1z" fill="#fff"/></svg><button>OK</button><button>Cancel</button></footer>
    </section>

    <section class="panel-bar comments"><span>COMMENTS</span><svg class="round" width="14" height="14" viewBox="0 0 14 14"><circle cx="7" cy="7" r="6.800" fill="#2e2e2e"/><path d="M3 7h8M7 3v8" stroke="#ddd" stroke-width="1.600"/></svg><i class="bars"></i></section>

    <section class="navbar">
      <div class="nav-a">
        <svg viewBox="0 0 26 26" fill="none" stroke="#474d58" stroke-width="1.600"><path d="M9 8Q10 1 13 1q5 1 5 12t-5 12q-3 0-4-6M10 9Q2 10 2 13t11 5q11-1 11-5-1-3-4-4M20 15l-4 3 4 3"/><path d="M13 5l2 2M18 4v5M15.500 6.500h5" stroke-width="1.400"/><path d="M9 13.500h6M12 10.500v6" stroke="#2b86ee" stroke-width="2"/></svg><i class="caret"></i>
        <svg viewBox="0 0 26 26"><path d="M3 8L8 2l2 4 9-3v5" fill="none" stroke="#666" stroke-width="1.500"/><rect x="2" y="9" width="22" height="15" fill="#f4f4f6" stroke="#555" stroke-width="1.700"/><rect x="6" y="13" width="14" height="7" fill="#b9bcc6" stroke="#555" stroke-width="1.600"/></svg>
        <svg viewBox="0 0 26 26"><path d="M9 24Q4 19 1.500 14q1-2 3.500 0l3 2L5 6q1-3 3 0l2.500 6L10 3q1.500-3 3 0l1 9 2-9q2-2 3 0l-1 10 3-6q3-1 2.500 1L20 18q-1 5-3 6z" fill="#f8f8f9" stroke="#555" stroke-width="1.400"/></svg>
        <svg viewBox="0 0 26 26"><path d="M14 17l6 6" stroke="#4a505b" stroke-width="4"/><circle cx="9" cy="11" r="6.800" fill="#d5ecec" stroke="#606872" stroke-width="1.700"/><path d="M18 5h7M21.500 1.500v7M18 11.500h7" stroke="#444" stroke-width="1.600"/></svg>
        <svg viewBox="0 0 26 26"><path d="M2 2h22v22H2z" fill="none" stroke="#666" stroke-width="1.500" stroke-dasharray="3 2"/><path d="M17 17l8 7" stroke="#4a4a4a" stroke-width="5"/><circle cx="12" cy="11" r="9.500" fill="#d3eaea" stroke="#555" stroke-width="1.700"/></svg><i class="caret"></i>
      </div>
      <div class="nav-b">
        <svg viewBox="0 0 26 26"><rect x="1.500" y="2" width="23" height="17.500" rx="1" fill="#f2f2f3" stroke="#444" stroke-width="1.700"/><rect x="5" y="5" width="16" height="11.500" fill="#92b7e4" stroke="#3f6397" stroke-width="1.500"/><path d="M10 20v2.500H7.500V25h11v-2.500H16V20z" fill="#eee" stroke="#555"/></svg><i class="caret"></i>
        <svg viewBox="0 0 26 26"><rect x="1.500" y="1.500" width="23" height="23" fill="#fafafa" stroke="#333" stroke-width="1.700"/><path d="M6 2v22M10.500 2v22M15 2v22M19.500 2v22M2 6h22M2 10.500h22M2 15h22M2 19.500h22" stroke="#7d7f87" stroke-width="1.300"/></svg><i class="caret"></i>
        <svg viewBox="0 0 26 26" fill="#a3c0e4" stroke="#44669b" stroke-width="1.600"><path d="M2 3h10v8.500H2zM14 3h10v8.500H14zM2 13.500h10V22H2zM14 13.500h10V22H14z"/><path d="M5 5.500h4.500V9H5zM17 5.500h4.500V9H17zM5 16h4.500v3.500H5zM17 16h4.500v3.500H17z" stroke="#6d8fc0" stroke-width=".8"/></svg><i class="caret"></i>
      </div>
    </section>
    <div class="status">2 selections</div>
  </main>

  <footer class="timeline">
    <svg class="controls" width="170" height="22" viewBox="0 0 170 22" fill="#4c4c4c"><path d="M0 0h3v22H0zM19 1v20L3.500 11zM52 1v20L37 11zM53.500 6H57v11h-3.500zM76 0v22l17.500-11zM112 6h3v11h-3zM116 1v20l15-10zM151 1v20l15-10zM165.500 0h3v22h-3z"/></svg>
    <div class="features">
      <svg><use href="#sketch-sm"/></svg><svg><use href="#form"/></svg><svg><use href="#form"/></svg><svg><use href="#form"/></svg>
      <div class="feat-on"><svg><use href="#plane-split"/></svg></div>
      <svg class="marker" width="190" height="58" viewBox="0 0 190 58"><path d="M13 46v6.500h142.500V46M47.500 46v6M83.500 46v6M119.500 46v6" fill="none" stroke="#666" stroke-width="2.600"/><path d="M109 8l5-5M117 8l5-5M125 8l5-5" stroke="#444" stroke-width="3.200" stroke-linecap="round"/><path d="M165 7h18v7l-7.500 7v34h-3V21l-7.500-7z" fill="#666"/></svg>
    </div>
    <svg class="settings"><use href="#gear"/></svg>
  </footer>
</div>
</body>
</html>
```
FILE: styles.css
```css
* { box-sizing: border-box; }
body { margin: 0; font-family: "Liberation Sans", Arial, sans-serif; font-size: 16px; color: #4b4b4b; overflow: hidden; }
button { font: inherit; color: inherit; border: 0; margin: 0; padding: 0; letter-spacing: inherit; }
svg { display: block; flex: none; }
.defs { position: absolute; }
.app { width: 1919px; height: 1015px; display: flex; flex-direction: column; }
.caret { flex: none; display: inline-block; width: 0; height: 0; border: 5px solid transparent; border-top: 8px solid #333; border-bottom: 0; }
.caret.dim { border-top-color: #7d7d7d; }

.titlebar { height: 35px; background: #fff; display: flex; align-items: center; padding: 0 28px 0 2px; }
.logo { margin-top: -1px; }
.titlebar h1 { margin: 2px 0 0 5px; font: 400 17.200px "Noto Sans", "Open Sans", sans-serif; color: #000; }
.winbtns { margin: 3px 0 0 auto; }

.quickbar { height: 42px; background: #d8d8d8; border-top: 1px solid #e2e2e2; display: flex; align-items: center; padding: 1px 17.500px 0; }
.q-file { margin-left: 40px; }
.q-c1 { margin-left: 9px; margin-top: -3px; }
.q-save { margin-left: 37px; }
.q-undo { margin-left: 35px; }
.q-c2, .q-c3 { margin-left: 10px; margin-top: -3px; }
.q-redo { margin-left: 23px; }
.quick-right { margin-left: auto; display: flex; align-items: center; }
.user { margin: 2px 0 0 43px; width: 173px; white-space: nowrap; }
.quick-right .caret { margin-left: 10px; margin-top: -2px; }
.help { width: 25px; height: 25px; margin-left: 39px; border-radius: 50%; background: #666; color: #ddd; font-weight: 700; font-size: 20px; line-height: 25px; text-align: center; }
.quick-right .help + .caret { margin-left: 6px; margin-right: 1px; }

.tabs { height: 36px; background: #d8d8d8; border-top: 3px solid #999; border-bottom: 1px solid #8c8c8c; display: flex; align-items: center; }
.tab { width: 300px; height: 32px; background: #ececec; border-right: 3px solid #999; display: flex; align-items: center; padding-left: 15px; }
.tab svg:first-child { margin-top: -2px; }
.tab-name { margin: 6px 0 0 15px; width: 131px; font-weight: 700; font-size: 18px; color: #757575; white-space: nowrap; }
.ring { margin-left: 60px; }
.tab-x { margin-left: 11px; color: #8f8f8f; }
.tab-add { margin-left: 10px; margin-top: 3px; }

.viewport { position: relative; height: 833px; background: #ececec; }
.scene { position: absolute; inset: 0; }
.grid path { fill: none; stroke: #e0e0e0; stroke-width: 1.300; }
.grid .major { stroke: #c8c8c8; stroke-width: 1.500; }
.grid-under { stroke: #e98a8d; stroke-width: 1.200; }
.edge { stroke: #111c33; stroke-width: 1.200; vector-effect: non-scaling-stroke; }
.edge.blue { stroke: #1b58bd; }
.top { font: 15px "Liberation Sans", sans-serif; fill: #92969e; text-anchor: middle; }
.axis { font: 700 15px "Liberation Sans", sans-serif; text-anchor: middle; }

.toolbar { position: absolute; left: 6px; top: 6px; height: 90px; display: flex; background: #ddd; }
.workspace { width: 160px; background: #adadad; color: #fff; font-weight: 700; display: flex; align-items: center; padding: 3px 0 0 9px; letter-spacing: -.400px; }
.grip { width: 8px; height: 35px; border: solid #8c8c8c; border-width: 0 2px; margin: -4px 34px 0 0; }
.workspace .caret { border-top-color: #fff; border-top-width: 6px; border-left-width: 4.500px; border-right-width: 4.500px; margin: -3px 0 0 8px; }
.group { position: relative; height: 90px; display: flex; flex-direction: column; align-items: center; padding-top: 11px; }
.group + .group::before { content: ""; position: absolute; left: -1px; top: 7px; width: 2px; height: 76px; background: #c9c9c9; }
.icons { display: flex; gap: 16px; }
.icons svg { width: 48px; height: 48px; }
.label { display: flex; align-items: center; margin: 8px 4px 0 0; height: 20px; font-size: 15.500px; letter-spacing: -.650px; white-space: nowrap; color: #474747; }
.label .caret { margin: -4px 0 0 7px; border-width: 7px 4.500px 0; }
.w201 { width: 201px; } .w138 { width: 138.300px; } .w141 { width: 141px; } .w111 { width: 111px; } .w96 { width: 96px; } .w89 { width: 89px; } .w105 { width: 104px; }
.w96 .label, .w89 .label, .w105 .label { margin-right: 0; }

.panel-bar { position: absolute; left: 6px; width: 450px; height: 38px; background: #d1d1d1; border: 1px solid #a6a6a6; box-shadow: inset 0 0 0 .5px #b5b5b5; display: flex; align-items: center; color: #707070; font-size: 15.500px; letter-spacing: -.450px; }
.browser { top: 102px; }
.comments { top: 789px; padding-left: 23px; }
.collapse { margin: 2px 0 0 6px; }
.panel-bar span { margin: -1px 0 0 17px; }
.round { margin-left: auto; margin-right: 10px; }
.bars { width: 5px; height: 17px; border: solid #8a8a8a; border-width: 0 1px; margin-right: 2px; }

.tree { position: absolute; left: 0; top: 147px; margin: 0; padding: 0; list-style: none; display: flex; flex-direction: column; gap: 6px; }
.tree li { display: flex; align-items: center; height: 30px; }
.l0 { padding-left: 30px; } .l1 { padding-left: 57px; } .l2 { padding-left: 114px; }
.open { width: 18px; height: 18px; margin-right: 12px; margin-top: -1px; }
.shut { width: 18px; height: 22px; margin-right: 12px; }
.bar { position: relative; height: 30px; background: #cbcbcb; display: flex; align-items: center; white-space: nowrap; }
.bulb { width: 18px; height: 24px; margin-left: 7px; }
.ti { width: 24px; height: 24px; margin-left: 16.500px; }
.t0 { margin-left: 4px; }
.bar span { margin: 1px 0 0 21.500px; }
.root { width: 252px; }
.hl { height: 26px; width: 213px; margin-left: 2px; background: #848484; border: 2px solid #777; display: flex; align-items: center; color: #fff; font-weight: 700; }
.hl .bulb { margin-left: 3px; } .hl .ti { margin-left: 17px; } .hl .nm { margin-left: 20px; letter-spacing: .500px; }
.radio { width: 20px; height: 20px; margin-left: 5px; }
.w-doc { width: 201px; } .w-views { width: 165px; } .w-origin { width: 142.500px; } .w-bodies { width: 154px; } .w-body1 { width: 172px; } .w-body2 { width: 154.500px; } .w-sketches { width: 172px; } .w-sketch1 { width: 160px; } .w-constr { width: 196.500px; }
.sel { height: 30px; width: 117px; margin-left: 12.500px; background: #6692b8; color: #fff; font-weight: 700; display: flex; align-items: center; }
.sel .ti { margin-left: 4px; }
.hatch { position: absolute; left: 37px; right: 2px; bottom: 2px; height: 5px; background: repeating-linear-gradient(135deg, #7a93b6 0 2.200px, transparent 2.700px 6px, #7a93b6 6.364px); }

.dialog { position: absolute; left: 1461px; top: 157px; width: 375px; height: 225px; border: 1px solid #a8a8a8; background: #dedede; display: flex; flex-direction: column; }
.dialog header { height: 36px; background: #d0d0d0; border-bottom: 1px solid #a8a8a8; display: flex; align-items: center; padding-left: 8px; color: #757575; font-size: 15.500px; letter-spacing: -.400px; }
.dialog header span { margin: -1px 0 0 18px; }
.fields { flex: 1; display: flex; flex-direction: column; gap: 5px; padding: 3px 0 0 16px; }
.field { display: flex; align-items: center; height: 34px; }
.field label { width: 167px; margin-top: 1px; }
.pick { width: 115px; height: 34px; background: #c8c8c8; display: flex; align-items: center; padding: 1px 0 0 7px; gap: 6px; white-space: nowrap; }
.pick svg { width: 17px; height: 25px; }
.pick.on { background: #5688b3; color: #fff; }
.clear { width: 15px; height: 15px; margin-left: 14px; color: #555; }
.dialog footer { height: 54px; background: #d0d0d0; border-top: 1px solid #a8a8a8; display: flex; align-items: center; padding-left: 20px; }
.info { width: 18px; height: 18px; margin-right: 116px; }
.dialog footer button { width: 89px; height: 28px; margin-right: 16px; background: #e9e9e9; border: 1px solid #b8b8b8; font-size: 17.500px; color: #777; }

.navbar { position: absolute; left: 776px; top: 790px; display: flex; gap: 10px; }
.navbar > div { height: 36px; background: #c9c9c9; display: flex; align-items: center; }
.navbar svg { width: 26px; height: 26px; }
.navbar .caret { border-width: 7px 4.500px 0; }
.nav-a { width: 217.500px; padding-left: 4px; }
.nav-a svg { margin-right: 13px; }
.nav-a svg:first-child, .nav-a svg:nth-last-child(2) { margin-right: 7px; }
.nav-a svg:nth-child(3) { margin-left: 8px; }
.nav-b { width: 140.500px; padding-left: 4px; }
.nav-b .caret { margin: 0 10px 0 2px; }
.nav-b .caret:last-child { margin-right: 0; }
.status { position: absolute; left: 1768px; top: 799px; font-weight: 700; font-size: 16.500px; letter-spacing: .450px; white-space: nowrap; }

.timeline { height: 69px; background: #cbcbcb; display: flex; align-items: center; padding: 3px 11px 0 16px; }
.features { position: relative; display: flex; align-items: center; margin-left: 32.500px; gap: 12px; margin-top: 3px; }
.features > svg { width: 24px; height: 25px; }
.feat-on { width: 36px; height: 36px; margin-left: -6px; background: #5287b5; border-radius: 2px; display: flex; align-items: center; padding-left: 5px; }
.feat-on svg { width: 27px; height: 27px; }
.features > .marker { position: absolute; left: 0; top: -10px; width: 190px; height: 58px; }
.settings { width: 26px; height: 26px; margin-left: auto; }
```
